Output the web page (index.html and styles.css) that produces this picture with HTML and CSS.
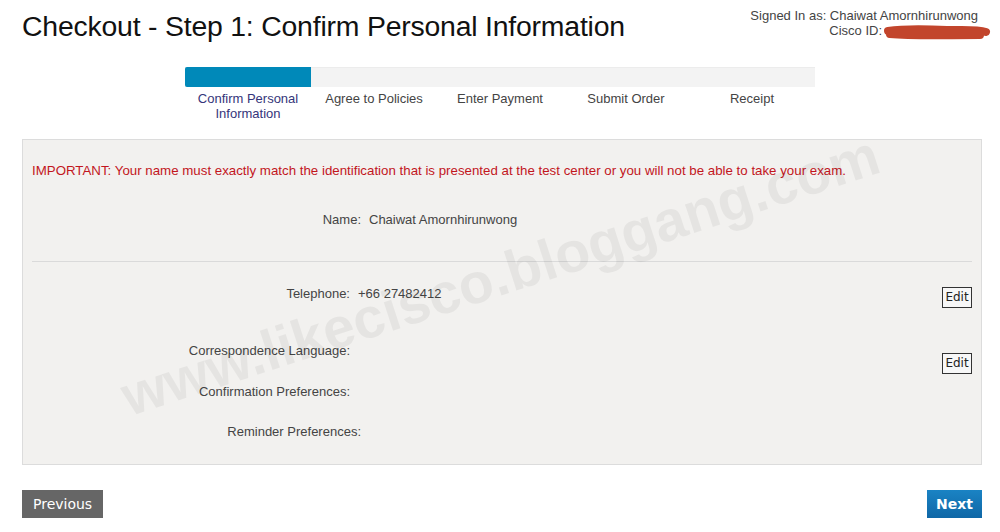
FILE: index.html
```html
<!DOCTYPE html>
<html>
<head>
<meta charset="utf-8">
<link rel="stylesheet" href="styles.css">
</head>
<body>
<div class="page">
  <header class="header">
    <h1 class="title">Checkout - Step 1: Confirm Personal Information</h1>
    <div class="signin">
      <div>Signed In as: Chaiwat Amornhirunwong</div>
      <div class="cisco">Cisco ID: <svg class="scribble" width="110" height="18" viewBox="0 0 110 18"><path d="M6 8 C25 5 45 6 65 7 C82 7 95 6 104 9 M8 11 C30 13 60 12 98 12" stroke="#c2452c" stroke-width="8" stroke-linecap="round" fill="none"/></svg></div>
    </div>
  </header>

  <div class="progress">
    <div class="bar"><div class="fill"></div></div>
    <div class="steps">
      <div class="step active">Confirm Personal Information</div>
      <div class="step">Agree to Policies</div>
      <div class="step">Enter Payment</div>
      <div class="step">Submit Order</div>
      <div class="step">Receipt</div>
    </div>
  </div>

  <section class="panel">
    <p class="important">IMPORTANT: Your name must exactly match the identification that is presented at the test center or you will not be able to take your exam.</p>
    <div class="row name-row">
      <span class="label lw-name">Name:</span>
      <span class="value">Chaiwat Amornhirunwong</span>
    </div>
    <hr class="sep">
    <div class="row tel-row">
      <span class="label lw-a">Telephone:</span>
      <span class="value">+66 27482412</span>
      <button class="edit">Edit</button>
    </div>
    <div class="row lang-row">
      <span class="label lw-a">Correspondence Language:</span>
      <span class="value"></span>
      <button class="edit">Edit</button>
    </div>
    <div class="row conf-row">
      <span class="label lw-a">Confirmation Preferences:</span>
    </div>
    <div class="row rem-row">
      <span class="label lw-name">Reminder Preferences:</span>
    </div>
  </section>

  <div class="actions">
    <button class="btn prev">Previous</button>
    <button class="btn next">Next</button>
  </div>

  <div class="watermark">www.likecisco.bloggang.com</div>
</div>
</body>
</html>
```

FILE: styles.css
```css
* { box-sizing: border-box; }
html, body { margin: 0; padding: 0; background: #fff; }
body {
  font-family: "Liberation Sans", Arial, sans-serif;
  color: #444;
  width: 1000px;
  height: 532px;
  overflow: hidden;
}
.page { position: relative; width: 1000px; height: 532px; }

.header {
  display: flex;
  justify-content: space-between;
  align-items: flex-start;
  height: 67px;
}
.title {
  margin: 0;
  padding: 9px 0 0 22px;
  font-weight: normal;
  font-size: 28.4px;
  line-height: 34px;
  color: #111;
  letter-spacing: -0.2px;
}
.signin {
  padding: 8px 22px 0 0;
  text-align: right;
  font-size: 13px;
  line-height: 15px;
  color: #444;
}
.cisco { position: relative; padding-right: 96px; }
.scribble { position: absolute; right: -14px; top: 0px; }

.progress { margin-left: 185px; width: 630px; }
.bar {
  height: 20px;
  background: #f3f3f3;
  border-top: 1px solid #ececec;
  display: flex;
}
.fill {
  width: 126px;
  background: #0089b9;
  border-radius: 2px 0 0 2px;
  margin-top: -1px;
}
.steps { display: flex; padding-top: 4px; }
.step {
  width: 126px;
  text-align: center;
  font-size: 13px;
  line-height: 15px;
  color: #444;
  padding: 0 10px;
}
.step.active { color: #35357a; }

.panel {
  margin: 18px 18px 0 22px;
  height: 326px;
  background: #f2f1ef;
  border: 1px solid #dcdcdc;
  padding: 23px 9px 0 9px;
}
.important {
  margin: 0;
  color: #c2161d;
  font-size: 13.3px;
  line-height: 16px;
}
.row {
  display: flex;
  align-items: flex-start;
  font-size: 13px;
  line-height: 16px;
  color: #444;
}
.label { text-align: right; white-space: nowrap; }
.lw-name { width: 329px; }
.lw-a { width: 318px; }
.value { margin-left: 8px; flex: 1; }
.name-row { margin-top: 33px; }
.sep {
  margin: 33px 0 0 0;
  border: 0;
  border-top: 1px solid #dadada;
  height: 0;
}
.tel-row { margin-top: 24px; }
.tel-row .edit { margin-top: 1px; }
.lang-row { margin-top: 35px; }
.lang-row .edit { margin-top: 10px; }
.conf-row { margin-top: 10px; }
.rem-row { margin-top: 24px; }

.edit {
  font-family: "DejaVu Sans", Verdana, sans-serif;
  font-size: 12px;
  line-height: 19px;
  height: 21px;
  width: 30px;
  padding: 0;
  background: #f7f7f7;
  border: 1px solid #333;
  color: #222;
  text-align: center;
}

.actions {
  display: flex;
  justify-content: space-between;
  margin: 25px 18px 0 22px;
}
.btn {
  font-family: "DejaVu Sans", Verdana, sans-serif;
  font-size: 14px;
  height: 28px;
  border: 0;
  color: #fff;
  padding: 0 11px;
}
.prev { background: #666; width: 81px; }
.next {
  background: linear-gradient(#1a83c4, #0f67a6);
  width: 55px;
  padding: 0;
  font-weight: bold;
  font-size: 14px;
}

.watermark {
  position: absolute;
  left: 500px;
  top: 275px;
  font-family: "Liberation Sans", Arial, sans-serif;
  font-weight: bold;
  font-size: 57px;
  line-height: 60px;
  color: rgba(0, 0, 0, 0.05);
  transform: translate(-50%, -50%) rotate(-18deg);
  white-space: nowrap;
  pointer-events: none;
}
```
